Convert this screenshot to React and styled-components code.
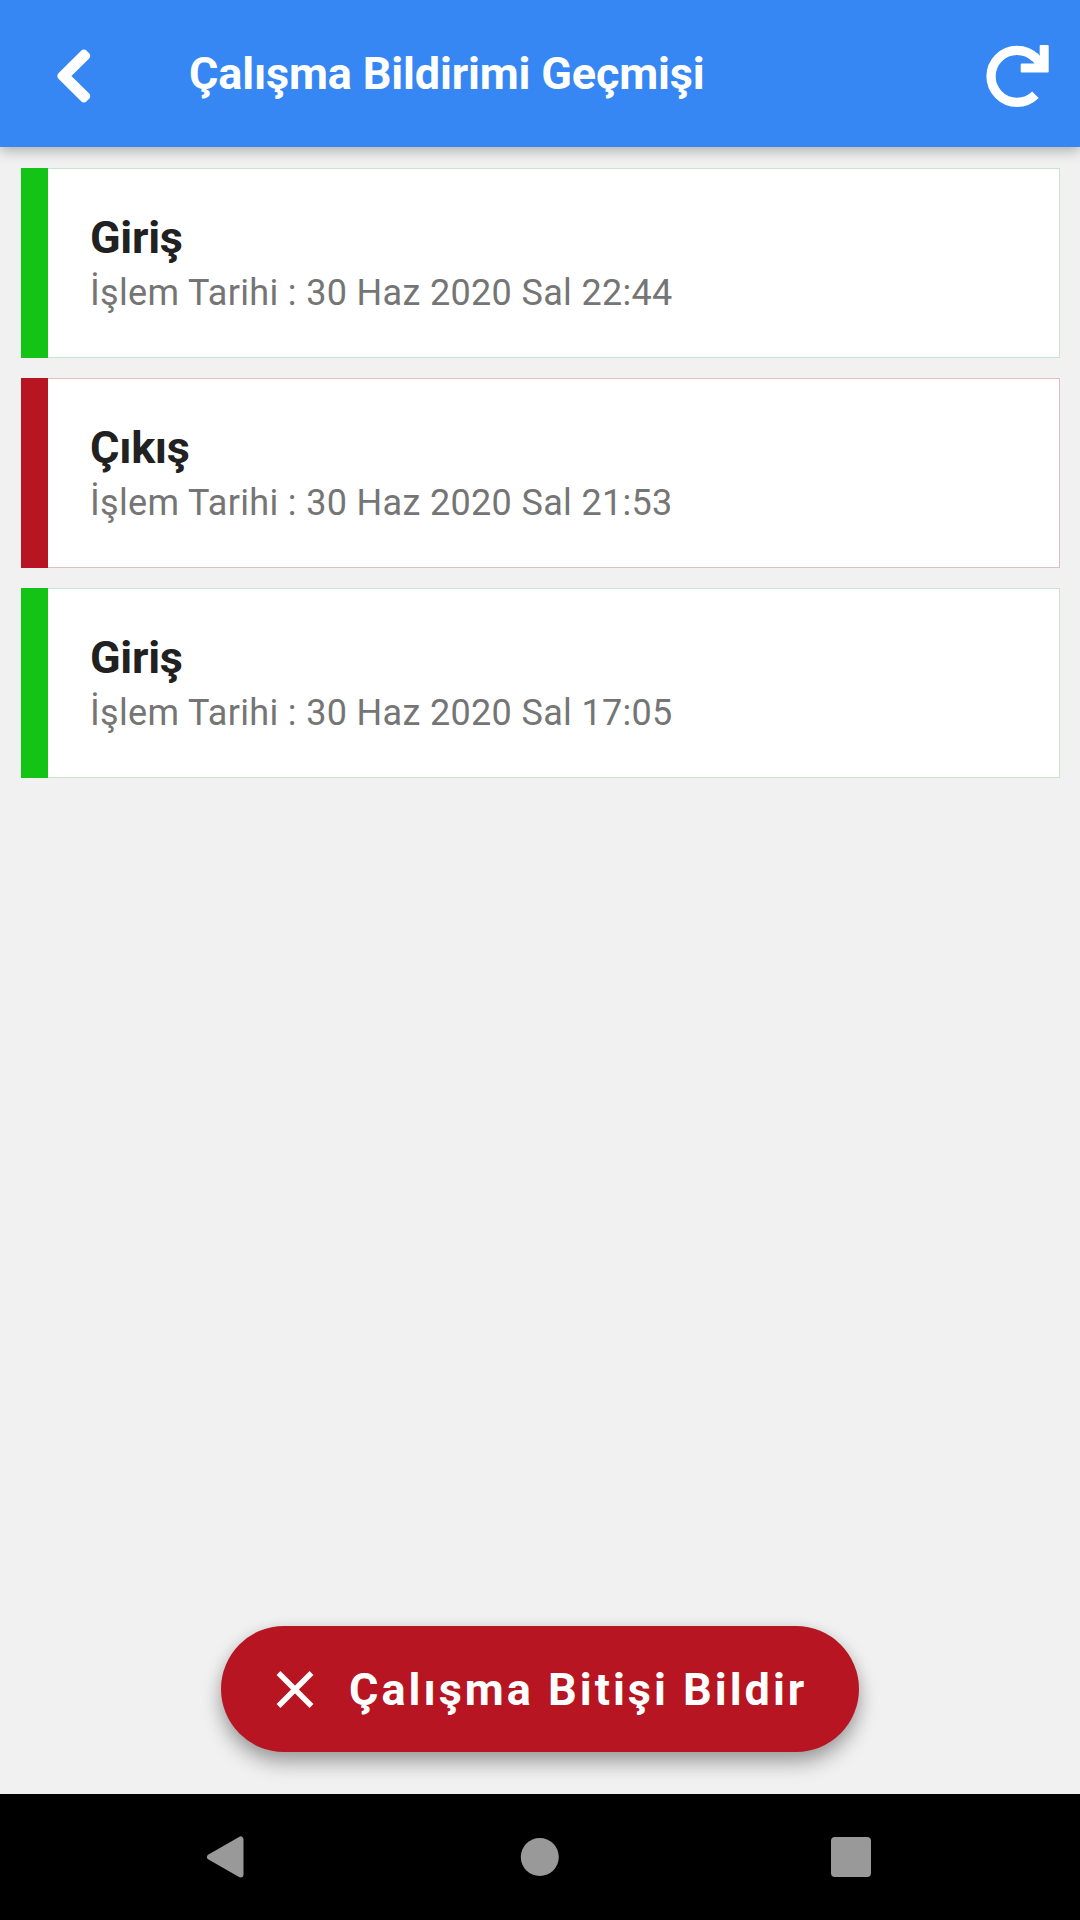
import React from "react";
import styled, { createGlobalStyle } from "styled-components";

const GlobalStyle = createGlobalStyle`
  * {
    box-sizing: border-box;
  }
  body {
    margin: 0;
    background: #f1f1f1;
    font-family: Roboto, "Noto Sans", sans-serif;
  }
`;

const Screen = styled.div`
  display: flex;
  flex-direction: column;
  width: 1080px;
  height: 1920px;
  background: #f1f1f1;
  overflow: hidden;
`;

const Header = styled.header`
  display: flex;
  align-items: center;
  flex: none;
  height: 147px;
  padding: 0 29px 0 56px;
  background: #3687f3;
  color: #fff;
  box-shadow: 0 4px 12px rgba(0, 0, 0, 0.27);
`;

const HeaderTitle = styled.h1`
  flex: 1;
  margin: 1px 0 0 97px;
  font-size: 45px;
  font-weight: 700;
  line-height: 54px;
  letter-spacing: -0.17px;
`;

const HeaderButton = styled.button`
  display: flex;
  margin: 5px 0 0;
  padding: 0;
  border: 0;
  background: none;
  color: inherit;
`;

const List = styled.ul`
  display: flex;
  flex-direction: column;
  flex: 1;
  gap: 20px;
  margin: 0;
  padding: 21px 20px 0 21px;
  list-style: none;
`;

const Card = styled.li`
  display: flex;
  height: 190px;
  background: ${(props) => (props.$entry ? "#13c417" : "#b61521")};
  padding-left: 27px;
`;

const CardBody = styled.div`
  flex: 1;
  padding: 41px 42px;
  background: #fff;
  border: 1px solid ${(props) => (props.$entry ? "#c5e6ca" : "#e3bcc4")};
  border-left: 0;
`;

const CardTitle = styled.h2`
  margin: 0;
  font-size: 45px;
  font-weight: 700;
  line-height: 55px;
  letter-spacing: -0.3px;
  color: #212121;
`;

const CardDate = styled.p`
  margin: 0;
  font-size: 36px;
  line-height: 56px;
  letter-spacing: 0.33px;
  color: #757575;
`;

const Footer = styled.div`
  display: flex;
  justify-content: center;
  flex: none;
  padding-bottom: 42px;
`;

const ActionButton = styled.button`
  display: flex;
  align-items: center;
  gap: 35px;
  width: 638px;
  height: 126px;
  padding: 0 0 0 55px;
  border: 0;
  border-radius: 63px;
  background: #b61521;
  color: #fff;
  font-family: inherit;
  font-size: 45px;
  font-weight: 700;
  letter-spacing: 3px;
  white-space: nowrap;
  box-shadow: 0 11px 20px rgba(0, 0, 0, 0.32), 0 2px 14px rgba(0, 0, 0, 0.08);
`;

const NavBar = styled.nav`
  display: flex;
  align-items: center;
  justify-content: space-between;
  flex: none;
  height: 126px;
  padding: 0 208px 0 206px;
  background: #000;
  color: #999;
`;

const records = [
  { title: "Giriş", entry: true, date: "30 Haz 2020 Sal 22:44" },
  { title: "Çıkış", entry: false, date: "30 Haz 2020 Sal 21:53" },
  { title: "Giriş", entry: true, date: "30 Haz 2020 Sal 17:05" },
];

const BackIcon = () => (
  <svg width="36" height="56" viewBox="0 0 36 56">
    <path
      d="M28.1 4.2L31.4 7.5Q31.4 8.2 31.2 8.4L11.4 28L31.2 47.6Q31.4 48 31.4 48.5L28.1 51.8H27.6L4.2 28.4V27.6L27.6 4.2Z"
      fill="currentColor"
      stroke="currentColor"
      strokeWidth="5.6"
      strokeLinejoin="round"
    />
  </svg>
);

const RefreshIcon = () => (
  <svg width="66" height="66" viewBox="0 0 66 66">
    <path
      d="M50.4 14.9A26 26 0 1 0 50.4 51.7"
      fill="none"
      stroke="currentColor"
      strokeWidth="9.3"
    />
    <path
      d="M55.7 2H62.7Q63.7 2 63.7 3V28.4Q63.7 29.4 62.7 29.4H36.7Q35.7 29.4 35.7 28.4V21.4Q35.7 20.4 36.7 20.4H49.5L46 16.5L52 10.3L54.7 12.8V3Q54.7 2 55.7 2Z"
      fill="currentColor"
    />
  </svg>
);

const CloseIcon = () => (
  <svg width="38" height="38" viewBox="0 -0.5 38 38">
    <path d="M2.5 2.5L35.5 35.5M35.5 2.5L2.5 35.5" stroke="currentColor" strokeWidth="5.4" />
  </svg>
);

const NavBackIcon = () => (
  <svg width="38" height="42" viewBox="0 0 38 42">
    <path
      d="M34.5 3.5V38.5L4 21Z"
      fill="currentColor"
      stroke="currentColor"
      strokeWidth="6"
      strokeLinejoin="round"
    />
  </svg>
);

const NavHomeIcon = () => (
  <svg width="42" height="38" viewBox="0 0 42 38">
    <circle cx="22.8" cy="19" r="19" fill="currentColor" />
  </svg>
);

const NavRecentIcon = () => (
  <svg width="41" height="40" viewBox="0 0 41 40">
    <rect width="40" height="40" rx="4" fill="currentColor" />
  </svg>
);

const App = () => (
  <Screen>
    <GlobalStyle />
    <Header>
      <HeaderButton aria-label="Geri">
        <BackIcon />
      </HeaderButton>
      <HeaderTitle>Çalışma Bildirimi Geçmişi</HeaderTitle>
      <HeaderButton aria-label="Yenile">
        <RefreshIcon />
      </HeaderButton>
    </Header>
    <List>
      {records.map((record, index) => (
        <Card key={index} $entry={record.entry}>
          <CardBody $entry={record.entry}>
            <CardTitle>{record.title}</CardTitle>
            <CardDate>İşlem Tarihi : {record.date}</CardDate>
          </CardBody>
        </Card>
      ))}
    </List>
    <Footer>
      <ActionButton>
        <CloseIcon />
        Çalışma Bitişi Bildir
      </ActionButton>
    </Footer>
    <NavBar>
      <NavBackIcon />
      <NavHomeIcon />
      <NavRecentIcon />
    </NavBar>
  </Screen>
);

export default App;
